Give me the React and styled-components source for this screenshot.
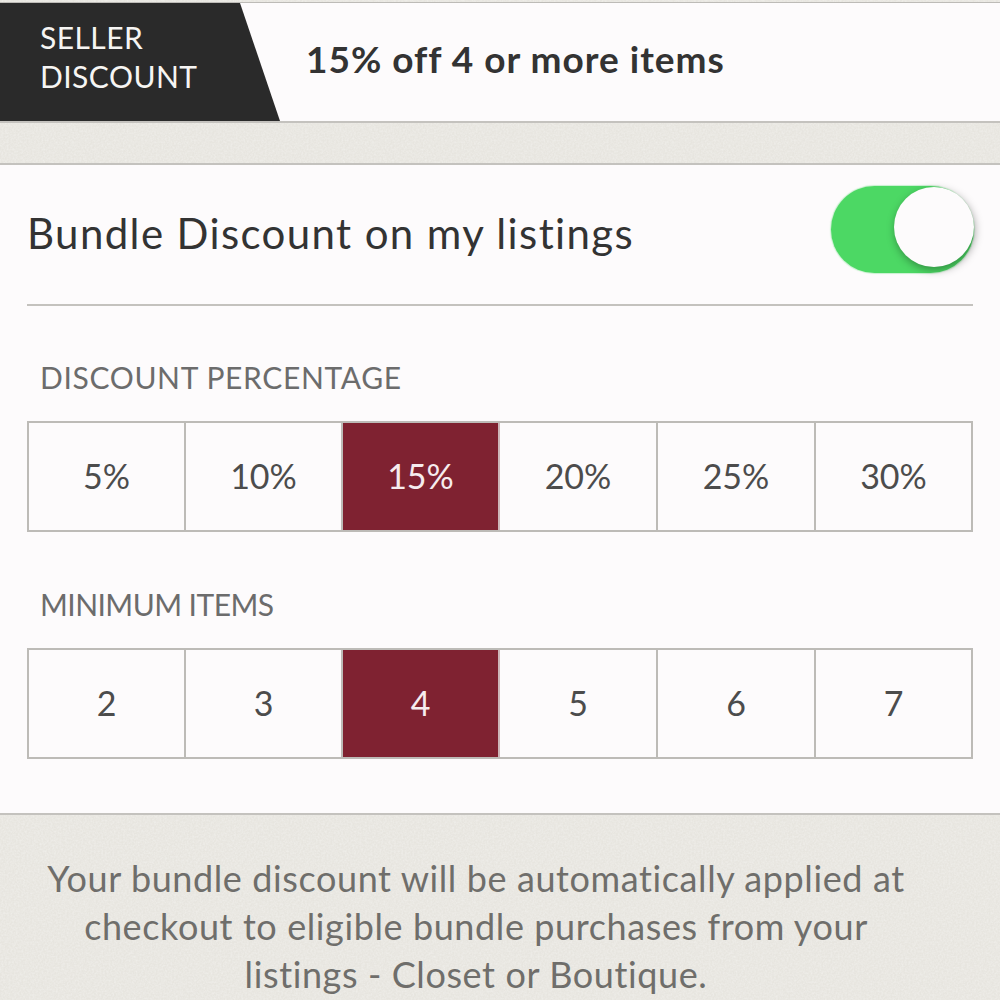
import React from "react"
import styled, { createGlobalStyle } from "styled-components"

const grain = `url("data:image/svg+xml,%3Csvg xmlns='http://www.w3.org/2000/svg' width='300' height='300'%3E%3Cfilter id='n'%3E%3CfeTurbulence type='fractalNoise' baseFrequency='0.55' numOctaves='2' stitchTiles='stitch'/%3E%3CfeColorMatrix values='0 0 0 0 1 0 0 0 0 1 0 0 0 0 1 0 0 0 0.55 -0.17'/%3E%3C/filter%3E%3Crect width='300' height='300' filter='url(%23n)'/%3E%3C/svg%3E")`

const GlobalStyle = createGlobalStyle`
  html, body {
    margin: 0;
    padding: 0;
    background: #e7e5df;
  }
  * {
    box-sizing: border-box;
  }
`

const Page = styled.div`
  width: 1000px;
  height: 1000px;
  overflow: hidden;
  padding-top: 2px;
  background: #e7e5df ${grain};
  font-family: Lato, "Liberation Sans", sans-serif;
`

const Banner = styled.div`
  display: flex;
  align-items: stretch;
  height: 121px;
  background: #fdfbfc;
  border-top: 1px solid #bdbbb7;
  border-bottom: 2px solid #c4c2be;
`

const Badge = styled.div`
  width: 280px;
  padding: 15px 0 0 40px;
  background: #2a2a2a;
  color: #f6f5f3;
  font-size: 30px;
  line-height: 39px;
  letter-spacing: 0.45px;
  clip-path: polygon(0 0, 240px 0, 280px 100%, 0 100%);
`

const BannerText = styled.div`
  align-self: center;
  margin: 0 0 8px 26px;
  color: #333;
  font-size: 37px;
  font-weight: 700;
  letter-spacing: 1px;
`

const Spacer = styled.div`
  height: 40px;
`

const Card = styled.section`
  height: 652px;
  padding: 0 27px;
  background: #fdfbfc;
  border-top: 2px solid #c4c2be;
  border-bottom: 2px solid #c4c2be;
`

const ToggleRow = styled.div`
  display: flex;
  align-items: center;
  justify-content: space-between;
  height: 141px;
  border-bottom: 2px solid #c4c2be;
`

const ToggleLabel = styled.span`
  color: #333;
  font-size: 42px;
  letter-spacing: 1.38px;
  margin-bottom: 4px;
`

const Switch = styled.div`
  position: relative;
  width: 143px;
  height: 87px;
  margin: 0 -1px 10px 0;
  border-radius: 44px;
  background: #4cd864;
  box-shadow: 0 0 1px 1px rgba(76, 216, 100, 0.3);
`

const Knob = styled.div`
  position: absolute;
  top: 1px;
  right: 0;
  width: 80px;
  height: 80px;
  border-radius: 50%;
  background: #fdfbfc;
  box-shadow: 1px 3px 8px rgba(0, 0, 0, 0.35);
`

const SectionLabel = styled.div`
  margin: ${({ $first }) => ($first ? "54px" : "55px")} 0 27px 13px;
  height: 34px;
  color: #6c6c6c;
  font-size: 30px;
  line-height: 34px;
  letter-spacing: ${({ $spacing }) => $spacing};
`

const Options = styled.div`
  display: grid;
  grid-template-columns: 157px 157px 157px 158px 158px 1fr;
  width: 946px;
  height: 111px;
  border: 2px solid #bdbbb7;
`

const Option = styled.div`
  display: flex;
  align-items: center;
  justify-content: center;
  padding-bottom: 2px;
  font-size: 34px;
  color: ${({ $active }) => ($active ? "#f6ecee" : "#4c4c4c")};
  background: ${({ $active }) => ($active ? "#7f2231" : "transparent")};
  border-right: ${({ $last }) => ($last ? "0" : "2px solid")};
  border-right-color: ${({ $active }) => ($active ? "#cdb6b9" : "#bdbbb7")};
`

const Note = styled.p`
  margin: 39px 0 0;
  padding-right: 48px;
  color: #6f6e6b;
  font-size: 36px;
  line-height: 48px;
  letter-spacing: 0.6px;
  text-align: center;
`

const OptionRow = ({ values, active }) => (
  <Options>
    {values.map((value, i) => (
      <Option key={value} $active={value === active} $last={i === values.length - 1}>
        {value}
      </Option>
    ))}
  </Options>
)

const App = () => {
  return (
    <Page>
      <GlobalStyle />
      <Banner>
        <Badge>
          SELLER
          <br />
          DISCOUNT
        </Badge>
        <BannerText>15% off 4 or more items</BannerText>
      </Banner>
      <Spacer />
      <Card>
        <ToggleRow>
          <ToggleLabel>Bundle Discount on my listings</ToggleLabel>
          <Switch>
            <Knob />
          </Switch>
        </ToggleRow>
        <SectionLabel $first $spacing="0.65px">DISCOUNT PERCENTAGE</SectionLabel>
        <OptionRow values={["5%", "10%", "15%", "20%", "25%", "30%"]} active="15%" />
        <SectionLabel $spacing="-0.55px">MINIMUM ITEMS</SectionLabel>
        <OptionRow values={["2", "3", "4", "5", "6", "7"]} active="4" />
      </Card>
      <Note>
        Your bundle discount will be automatically applied at
        <br />
        checkout to eligible bundle purchases from your
        <br />
        listings - Closet or Boutique.
      </Note>
    </Page>
  )
}

export default App
